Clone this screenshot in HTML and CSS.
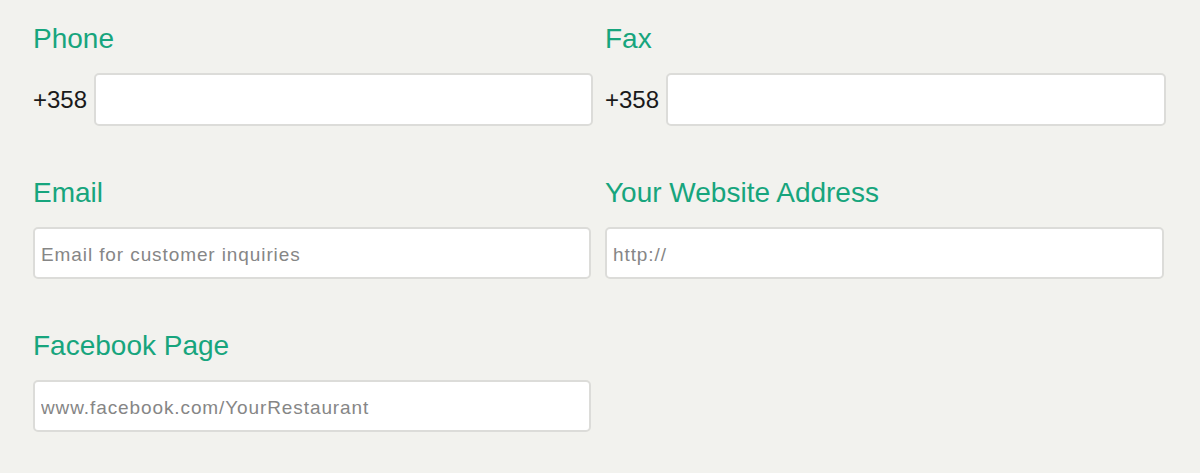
FILE: index.html
```html
<!doctype html>
<html lang="en">
  <head>
    <meta charset="UTF-8" />
    <meta name="viewport" content="width=device-width, initial-scale=1.0" />
    <title>Contact Details</title>
    <link rel="stylesheet" href="styles.css">
  </head>
  <body>
    <form class="contact-form">
      <div class="field">
        <label class="field-label" for="phone">Phone</label>
        <div class="prefixed">
          <span class="prefix">+358</span>
          <input class="text-input" id="phone" type="tel" />
        </div>
      </div>

      <div class="field">
        <label class="field-label" for="fax">Fax</label>
        <div class="prefixed">
          <span class="prefix">+358</span>
          <input class="text-input" id="fax" type="tel" />
        </div>
      </div>

      <div class="field">
        <label class="field-label" for="email">Email</label>
        <input class="text-input" id="email" type="email" placeholder="Email for customer inquiries" />
      </div>

      <div class="field">
        <label class="field-label" for="website">Your Website Address</label>
        <input class="text-input" id="website" type="url" placeholder="http://" />
      </div>

      <div class="field">
        <label class="field-label" for="facebook">Facebook Page</label>
        <input class="text-input" id="facebook" type="text" placeholder="www.facebook.com/YourRestaurant" />
      </div>
    </form>
  </body>
</html>
```

FILE: styles.css
```css
* {
  margin: 0;
  padding: 0;
  box-sizing: border-box;
}

html,
body {
  height: 100%;
  background: #f2f2ee;
  font-family: 'Liberation Sans', Arial, sans-serif;
  color: #1a1a1a;
  overflow: hidden;
}

.contact-form {
  display: grid;
  grid-template-columns: 558px 559px;
  column-gap: 14px;
  row-gap: 51px;
  padding: 23px 0 0 33px;
}

.field {
  display: flex;
  flex-direction: column;
  gap: 18px;
}

.field-label {
  font-size: 28px;
  line-height: 32px;
  color: #17a57d;
}

.prefixed {
  display: flex;
  align-items: center;
  gap: 7px;
  margin-right: -2px;
}

.prefix {
  font-size: 24px;
  color: #1a1a1a;
}

.text-input {
  width: 100%;
  height: 52px;
  padding: 3px 6px 0;
  background: #fff;
  border: 2px solid #dcdcd9;
  border-radius: 5px;
  font-family: inherit;
  font-size: 19px;
  letter-spacing: 0.9px;
  color: #333;
  outline: none;
}

.prefixed .text-input {
  flex: 1;
  height: 53px;
}

.text-input::placeholder {
  color: #868686;
}
```
